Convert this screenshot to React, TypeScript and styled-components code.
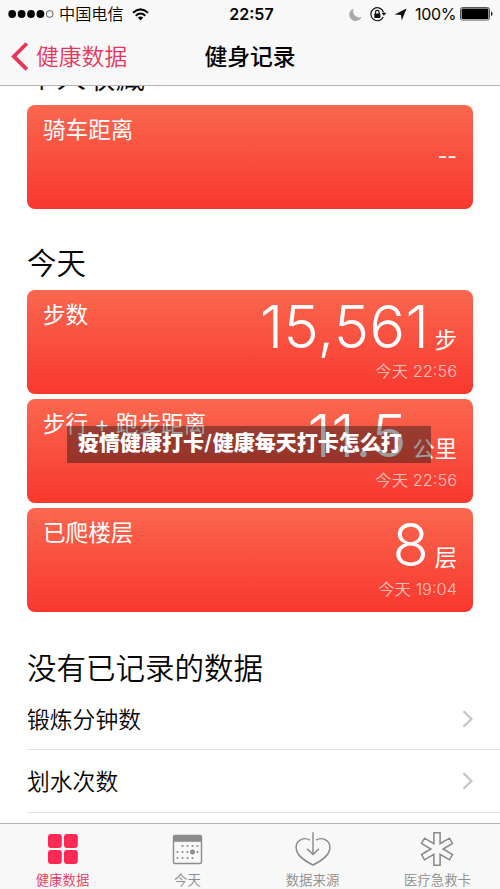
import React from 'react';
import styled, { createGlobalStyle } from 'styled-components';

const GlobalStyle = createGlobalStyle`
  * { box-sizing: border-box; }
  body { margin: 0; background: #fff; }
`;

const PINK = '#e9355c';

const Phone = styled.div`
  position: relative;
  width: 500px;
  height: 889px;
  display: flex;
  flex-direction: column;
  overflow: hidden;
  background: #fff;
  color: #050505;
  font-family: Inter, 'Noto Sans CJK SC', sans-serif;
  white-space: nowrap;
`;

const Header = styled.header`
  flex: none;
  height: 86px;
  background: #f8f8f8;
  border-bottom: 1px solid #b4b4b4;
`;

const StatusBar = styled.div`
  height: 28px;
  display: grid;
  grid-template-columns: 1fr auto 1fr;
  align-items: center;
  padding: 0 7px 0 8px;
  font-size: 16px;
  line-height: 28px;
`;

const StatusGroup = styled.div<{ $end?: boolean }>`
  display: flex;
  align-items: center;
  justify-content: ${(p) => (p.$end ? 'flex-end' : 'flex-start')};
`;

const Carrier = styled.span`
  margin: 0 8px 0 5px;
  font-size: 16.2px;
  font-weight: 350;
`;

const Clock = styled.span`
  padding-left: 2px;
  font-size: 16px;
  font-weight: 600;
`;

const Percent = styled.span`
  margin: 0 4px 0 8px;
  font-size: 16px;
  letter-spacing: -0.35px;
`;

const NavBar = styled.div`
  height: 57px;
  display: grid;
  grid-template-columns: 1fr auto 1fr;
  align-items: center;
  padding: 0 10px;
  font-size: 22.8px;
  line-height: 57px;
`;

const Back = styled.div`
  display: flex;
  align-items: center;
  gap: 6px;
  color: ${PINK};
  font-weight: 350;
`;

const NavTitle = styled.div`
  font-weight: 500;
`;

const Content = styled.main`
  flex: 1;
  min-height: 0;
  overflow: hidden;
`;

const SectionTitle = styled.h2<{ $top: number; $gap: number }>`
  margin: ${(p) => p.$top}px 0 ${(p) => p.$gap}px 27px;
  font-size: 29.5px;
  line-height: 40px;
  font-weight: 350;
`;

const CardList = styled.div`
  display: flex;
  flex-direction: column;
  gap: 5.2px;
  margin: 0 27px;
`;

const Card = styled.section`
  height: 104px;
  display: flex;
  justify-content: space-between;
  padding: 10px 16px 0;
  border-radius: 8px;
  background: linear-gradient(#fa674f, #f8382e);
  color: #fff;
`;

const CardTitle = styled.div`
  font-size: 22.6px;
  line-height: 29px;
`;

const Reading = styled.div`
  display: flex;
  flex-direction: column;
  align-items: flex-end;
`;

const ValueLine = styled.div`
  height: 60px;
  display: flex;
  align-items: baseline;
  line-height: 53px;
`;

const Value = styled.span`
  font-size: 59.5px;
  font-weight: 300;
  letter-spacing: 0.3px;
`;

const Unit = styled.span`
  margin-left: 5.5px;
  font-size: 22.3px;
`;

const Timestamp = styled.div`
  font-size: 16.4px;
  line-height: 22px;
  font-weight: 350;
  color: rgba(255, 255, 255, 0.68);
`;

const Dashes = styled.div`
  margin-top: 27px;
  font-size: 21px;
  line-height: 30px;
  font-weight: 400;
`;

const Row = styled.div`
  height: 62.3px;
  display: flex;
  align-items: center;
  justify-content: space-between;
  margin-left: 27px;
  padding-right: 26px;
  border-bottom: 1.5px solid #e1e1e2;
  font-size: 22.8px;
  font-weight: 350;
`;

const TabBar = styled.nav`
  flex: none;
  height: 66px;
  display: grid;
  grid-template-columns: repeat(4, 1fr);
  background: #f8f8f8;
  border-top: 1px solid #b2b2b2;
`;

const Tab = styled.div<{ $active?: boolean }>`
  display: flex;
  flex-direction: column;
  align-items: center;
  padding-top: 7px;
  color: ${(p) => (p.$active ? PINK : '#8c8c8c')};
  font-size: 13.4px;
  line-height: 20px;
  font-weight: 350;

  svg { display: block; margin-bottom: 3px; }
`;

const Banner = styled.div`
  position: absolute;
  left: 67px;
  top: 426px;
  width: 364px;
  height: 37px;
  padding-left: 11px;
  background: rgba(20, 20, 20, 0.42);
  color: #fff;
  font-size: 21px;
  font-weight: 900;
  line-height: 34px;
`;

const Slash = styled.span`
  font-weight: 600;
  letter-spacing: 0.8px;
`;

const Signal = () => (
  <svg width="46" height="10" viewBox="0 0 46 10">
    {[4.2, 13.6, 23, 32.4].map((x) => <circle key={x} cx={x} cy="5" r="3.9" fill="#050505" />)}
    <circle cx="41.7" cy="5" r="3.4" fill="none" stroke="#333" strokeWidth="0.8" />
  </svg>
);

const Wifi = () => (
  <svg width="17" height="13" viewBox="0 0 17 13" fill="none" stroke="#050505" strokeWidth="2">
    <path d="M1 4.7Q8.5-2 16 4.7" />
    <path d="M3.7 7.7Q8.5 3.4 13.3 7.7" />
    <path d="M8.5 12.4L5.8 9.6Q8.5 7.4 11.2 9.6Z" fill="#050505" stroke="none" />
  </svg>
);

const Moon = () => (
  <svg width="13" height="13" viewBox="0 0 13 13">
    <path d="M4.6.5A6.4 6.4 0 1 0 12.6 9C7 10.8 2.7 6 4.6.5Z" fill="#aaa" />
  </svg>
);

const RotationLock = () => (
  <svg width="17" height="15" viewBox="0 0 17 15" fill="none" stroke="#111" strokeWidth="1.2">
    <path d="M13.6 5.2A6.5 6.5 0 1 0 13.3 10" />
    <path d="M11.4 5.8h5l-2.5 3Z" fill="#111" stroke="none" />
    <rect x="4.3" y="6.4" width="6.1" height="4.6" rx=".5" fill="#111" stroke="none" />
    <path d="M5.5 7V5.2a1.8 1.8 0 0 1 3.6 0V7" />
  </svg>
);

const LocationArrow = () => (
  <svg width="13" height="13" viewBox="0 0 13 13">
    <path d="M12.5.5L7.8 12.5 7 7 .6 6.4Z" fill="#111" />
  </svg>
);

const Battery = () => (
  <svg width="33" height="14" viewBox="0 0 33 14">
    <rect x=".5" y=".5" width="29" height="12.5" rx="2" fill="none" stroke="#555" />
    <rect x="1.6" y="1.6" width="26.8" height="10.3" rx="1" fill="#000" />
    <path d="M31 4.6q1.6.4 1.6 2.2T31 9Z" fill="#222" />
  </svg>
);

const BackChevron = () => (
  <svg width="20" height="29" viewBox="0 0 20 29" fill="none" stroke={PINK} strokeWidth="3.8">
    <path d="M16.8 1.5L3.8 14.4L16.8 27.3" />
  </svg>
);

const RowChevron = () => (
  <svg width="12" height="18" viewBox="0 0 12 18" fill="none" stroke="#c4c4c8" strokeWidth="2.2">
    <path d="M1.5 1.2L9.5 9L1.5 16.8" />
  </svg>
);

const GridIcon = () => (
  <svg width="36" height="36" viewBox="0 0 36 36" fill="#ff2953">
    <rect x="3" y="3" width="13.8" height="14" rx="3" />
    <rect x="19" y="3" width="13.8" height="14" rx="3" />
    <rect x="3" y="19" width="13.8" height="14" rx="3" />
    <rect x="19" y="19" width="13.8" height="14" rx="3" />
  </svg>
);

const CALENDAR_DOTS = [[13, 15], [18, 15], [23, 15], [28, 15], [8, 21], [13, 21], [18, 21], [28, 21], [8, 27], [13, 27], [18, 27], [23, 27]];

const CalendarIcon = () => (
  <svg width="36" height="36" viewBox="0.5 0 36 36" fill="#8c8c8c">
    <rect x="4" y="4.5" width="28" height="28" rx="1.5" fill="none" stroke="#8c8c8c" strokeWidth="1.4" />
    <rect x="4" y="4.5" width="28" height="6.3" />
    {CALENDAR_DOTS.map(([x, y]) => <rect key={`${x}-${y}`} x={x - 0.9} y={y - 0.9} width="1.8" height="1.8" />)}
    <circle cx="23" cy="21" r="2.5" />
  </svg>
);

const HeartIcon = () => (
  <svg width="36" height="36" viewBox="0 0 36 36" fill="none" stroke="#888" strokeWidth="1.4">
    <path d="M14.8 9.2C9.5 5.7 1.1 8.7 1.1 16.5C1.1 24.5 11.5 31 18 34C24.5 31 34.9 24.5 34.9 16.5C34.9 8.7 26.5 5.7 21.2 9.2" />
    <path d="M18 1.2V23.6M12 17.8L18 23.6L24 17.8" />
  </svg>
);

const MedicalIcon = () => (
  <svg width="36" height="36" viewBox="1 0 36 36" fill="none" stroke="#888" strokeWidth="1.5">
    <path d="M14.9 1.8H21.1V12.6L30.5 7.2L33.5 12.5L24.1 18L33.5 23.5L30.5 28.8L21.1 23.4V34.2H14.9V23.4L5.5 28.8L2.5 23.5L11.9 18L2.5 12.5L5.5 7.2L14.9 12.6Z" />
  </svg>
);

const ACTIVITIES = [
  { title: '步数', value: '15,561', unit: '步', time: '今天 22:56' },
  { title: '步行 + 跑步距离', value: '11.5', unit: '公里', time: '今天 22:56' },
  { title: '已爬楼层', value: '8', unit: '层', time: '今天 19:04' },
];

const TABS = [
  { label: '健康数据', Icon: GridIcon, active: true },
  { label: '今天', Icon: CalendarIcon },
  { label: '数据来源', Icon: HeartIcon },
  { label: '医疗急救卡', Icon: MedicalIcon },
];

const IconSlot = styled.span<{ $gap: number }>`
  display: flex;
  margin-right: ${(p) => p.$gap}px;
`;

export default function App() {
  return (
    <>
      <GlobalStyle />
      <Phone>
        <Header>
          <StatusBar>
            <StatusGroup><Signal /><Carrier>中国电信</Carrier><Wifi /></StatusGroup>
            <Clock>22:57</Clock>
            <StatusGroup $end>
              <IconSlot $gap={8}><Moon /></IconSlot>
              <IconSlot $gap={7}><RotationLock /></IconSlot>
              <LocationArrow />
              <Percent>100%</Percent>
              <Battery />
            </StatusGroup>
          </StatusBar>
          <NavBar>
            <Back><BackChevron />健康数据</Back>
            <NavTitle>健身记录</NavTitle>
          </NavBar>
        </Header>
        <Content>
          <SectionTitle $top={-29} $gap={8}>个人收藏</SectionTitle>
          <CardList>
            <Card><CardTitle>骑车距离</CardTitle><Dashes>--</Dashes></Card>
          </CardList>
          <SectionTitle $top={34} $gap={7}>今天</SectionTitle>
          <CardList>
            {ACTIVITIES.map((a) => (
              <Card key={a.title}>
                <CardTitle>{a.title}</CardTitle>
                <Reading>
                  <ValueLine><Value>{a.value}</Value><Unit>{a.unit}</Unit></ValueLine>
                  <Timestamp>{a.time}</Timestamp>
                </Reading>
              </Card>
            ))}
          </CardList>
          <SectionTitle $top={35.6} $gap={0}>没有已记录的数据</SectionTitle>
          {['锻炼分钟数', '划水次数'].map((label) => (
            <Row key={label}>{label}<RowChevron /></Row>
          ))}
        </Content>
        <TabBar>
          {TABS.map(({ label, Icon, active }) => (
            <Tab key={label} $active={active}><Icon />{label}</Tab>
          ))}
        </TabBar>
        <Banner>疫情健康打卡<Slash>/</Slash>健康每天打卡怎么打</Banner>
      </Phone>
    </>
  );
}
